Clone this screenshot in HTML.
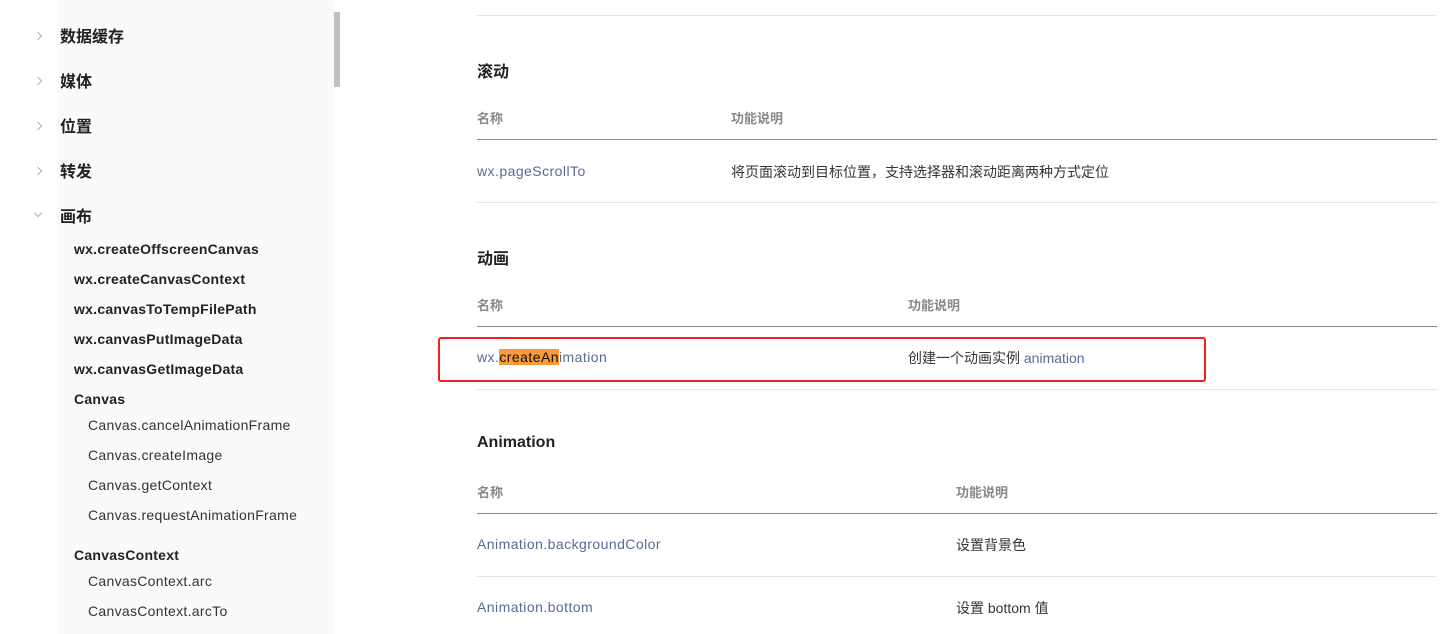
<!DOCTYPE html>
<html><head><meta charset="utf-8"><style>
*{margin:0;padding:0;box-sizing:border-box}
body{width:1456px;height:634px;overflow:hidden;background:#fff;font-family:"Liberation Sans","Noto Sans CJK SC",sans-serif;color:#353535;position:relative}
.a{position:absolute;white-space:nowrap}
.side{position:absolute;left:57px;top:0;width:277px;height:634px;background:#fafafa}
.sb{position:absolute;left:334px;top:12px;width:6px;height:75px;background:#c1c1c1}
.chev{position:absolute;left:35px;width:6px;height:6px;border-right:1px solid #b0b0b0;border-top:1px solid #b0b0b0;transform:rotate(45deg)}
.t1{font-size:16px;font-weight:bold;color:#222;left:60px}
.t2{font-size:14px;font-weight:bold;color:#222;left:74px;letter-spacing:0.25px}
.t3{font-size:14px;color:#333;left:88px;letter-spacing:0.3px}
.h{font-size:16px;font-weight:bold;color:#222;left:477px}
.th{font-size:13px;font-weight:bold;color:#888}
.ln{position:absolute;left:477px;width:960px;height:1px}
.lk{color:#576b95;font-size:14px;letter-spacing:0.45px}
.td{font-size:14px;color:#353535}
</style></head><body>
<div class="side"></div><div class="sb"></div>
<div class="chev" style="top:33px"></div>
<div class="chev" style="top:78px"></div>
<div class="chev" style="top:123px"></div>
<div class="chev" style="top:168px"></div>
<div class="chev" style="top:210px;transform:rotate(135deg)"></div>
<div class="a t1" style="top:23px">数据缓存</div>
<div class="a t1" style="top:68px">媒体</div>
<div class="a t1" style="top:113px">位置</div>
<div class="a t1" style="top:158px">转发</div>
<div class="a t1" style="top:203px">画布</div>
<div class="a t2" style="top:241px">wx.createOffscreenCanvas</div>
<div class="a t2" style="top:271px">wx.createCanvasContext</div>
<div class="a t2" style="top:301px">wx.canvasToTempFilePath</div>
<div class="a t2" style="top:331px">wx.canvasPutImageData</div>
<div class="a t2" style="top:361px">wx.canvasGetImageData</div>
<div class="a t2" style="top:391px">Canvas</div>
<div class="a t3" style="top:417px">Canvas.cancelAnimationFrame</div>
<div class="a t3" style="top:447px">Canvas.createImage</div>
<div class="a t3" style="top:477px">Canvas.getContext</div>
<div class="a t3" style="top:507px">Canvas.requestAnimationFrame</div>
<div class="a t2" style="top:547px">CanvasContext</div>
<div class="a t3" style="top:573px">CanvasContext.arc</div>
<div class="a t3" style="top:603px">CanvasContext.arcTo</div>

<div class="ln" style="top:15px;background:#e5e5e5"></div>
<div class="a h" style="top:58px">滚动</div>
<div class="a th" style="top:108px;left:477px">名称</div>
<div class="a th" style="top:108px;left:731px">功能说明</div>
<div class="ln" style="top:139px;background:#8a8a8a"></div>
<div class="a lk" style="top:163px;left:477px">wx.pageScrollTo</div>
<div class="a td" style="top:162px;left:731px">将页面滚动到目标位置，支持选择器和滚动距离两种方式定位</div>
<div class="ln" style="top:202px;background:#e5e5e5"></div>

<div class="a h" style="top:245px">动画</div>
<div class="a th" style="top:295px;left:477px">名称</div>
<div class="a th" style="top:295px;left:908px">功能说明</div>
<div class="ln" style="top:326px;background:#8a8a8a"></div>
<div class="a lk" style="top:349px;left:477px">wx.<span style="background:#f89a3a;color:#111">createAn</span>imation</div>
<div class="a td" style="top:348px;left:908px">创建一个动画实例 <span style="color:#576b95">animation</span></div>
<div class="ln" style="top:389px;background:#e5e5e5"></div>
<div style="position:absolute;left:438px;top:337px;width:768px;height:45px;border:2px solid #f0201a;border-radius:3px"></div>

<div class="a h" style="top:434px">Animation</div>
<div class="a th" style="top:482px;left:477px">名称</div>
<div class="a th" style="top:482px;left:956px">功能说明</div>
<div class="ln" style="top:513px;background:#8a8a8a"></div>
<div class="a lk" style="top:536px;left:477px">Animation.backgroundColor</div>
<div class="a td" style="top:535px;left:956px">设置背景色</div>
<div class="ln" style="top:576px;background:#e5e5e5"></div>
<div class="a lk" style="top:599px;left:477px">Animation.bottom</div>
<div class="a td" style="top:598px;left:956px">设置 bottom 值</div>
</body></html>
